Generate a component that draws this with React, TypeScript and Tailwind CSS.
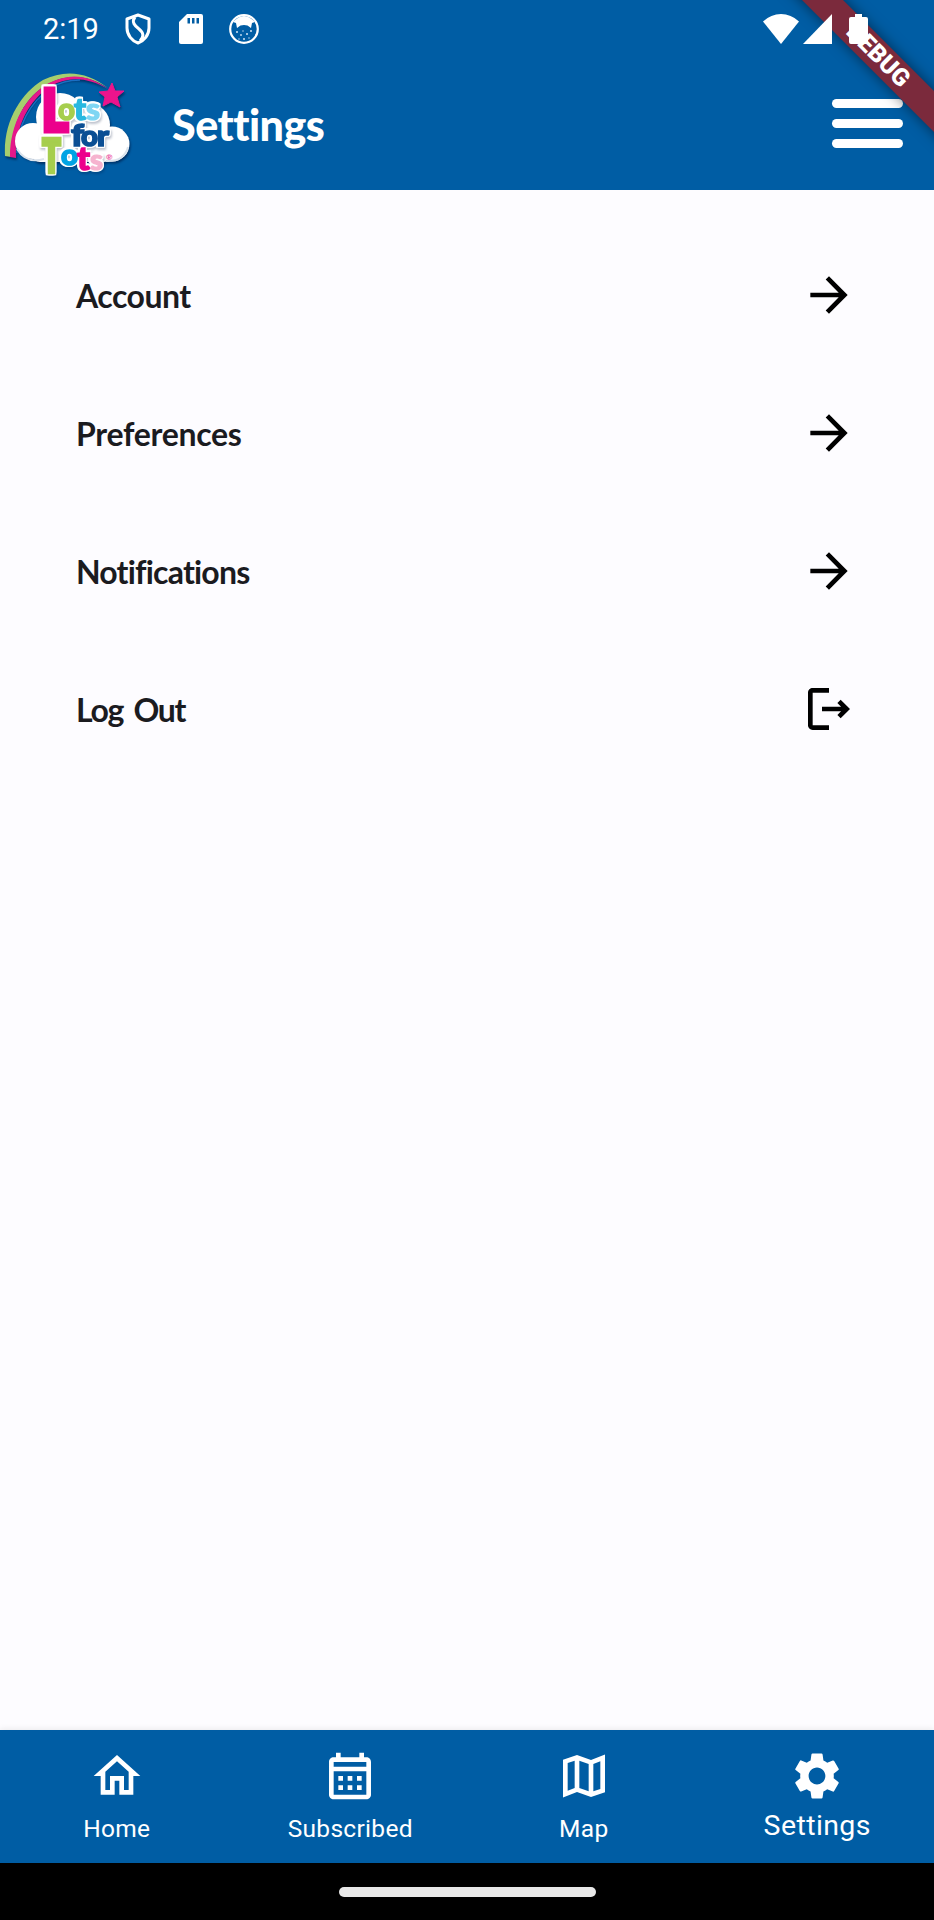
import React from "react";

const ARROW = "M12 4l-1.41 1.41L16.17 11H4v2h12.17l-5.58 5.59L12 20l8-8z";
const LOGOUT =
  "M17 8l-1.41 1.41L17.17 11H9v2h8.17l-1.58 1.58L17 16l4-4-4-4zM5 5h7V3H5c-1.1 0-2 .9-2 2v14c0 1.1.9 2 2 2h7v-2H5V5z";
const HOME = "M12 5.69l5 4.5V18h-2v-6H9v6H7v-7.81l5-4.5M12 3L2 12h3v8h6v-6h2v6h6v-8h3L12 3z";
const CALENDAR =
  "M19 4h-1V2h-2v2H8V2H6v2H5c-1.11 0-1.99.9-1.99 2L3 20c0 1.1.89 2 2 2h14c1.1 0 2-.9 2-2V6c0-1.1-.9-2-2-2zm0 16H5V10h14v10zm0-12H5V6h14v2zM9 14H7v-2h2v2zm4 0h-2v-2h2v2zm4 0h-2v-2h2v2zm-8 4H7v-2h2v2zm4 0h-2v-2h2v2zm4 0h-2v-2h2v2z";
const MAP =
  "M15 5.1L9 3 3 5.02v16.2l6-2.33 6 2.1 6-2.02V2.77L15 5.1zM10 5.47l4 1.4v11.66l-4-1.4V5.47zm-5 .99l3-1.01v11.7l-3 1.16V6.46zm14 11.08l-3 1.01V6.86l3-1.16v11.84z";
const GEAR =
  "M19.14 12.94c.04-.3.06-.61.06-.94 0-.32-.02-.64-.07-.94l2.03-1.58c.18-.14.23-.41.12-.61l-1.92-3.32c-.12-.22-.37-.29-.59-.22l-2.39.96c-.5-.38-1.03-.7-1.62-.94l-.36-2.54c-.04-.24-.24-.41-.48-.41h-3.84c-.24 0-.43.17-.47.41l-.36 2.54c-.59.24-1.13.57-1.62.94l-2.39-.96c-.22-.08-.47 0-.59.22L2.74 8.87c-.12.21-.08.47.12.61l2.03 1.58c-.05.3-.09.63-.09.94s.02.64.07.94l-2.03 1.58c-.18.14-.23.41-.12.61l1.92 3.32c.12.22.37.29.59.22l2.39-.96c.5.38 1.03.7 1.62.94l.36 2.54c.05.24.24.41.48.41h3.84c.24 0 .44-.17.47-.41l.36-2.54c.59-.24 1.13-.56 1.62-.94l2.39.96c.22.08.47 0 .59-.22l1.92-3.32c.12-.22.07-.47-.12-.61l-2.01-1.58zM12 15.6c-1.98 0-3.6-1.62-3.6-3.6s1.62-3.6 3.6-3.6 3.6 1.62 3.6 3.6-1.62 3.6-3.6 3.6z";

function Icon({ d }: { d: string }) {
  return (
    <svg viewBox="0 0 24 24" className="size-14 shrink-0" fill="currentColor">
      <path d={d} />
    </svg>
  );
}

type Glyph = { ch: string; x: number; y: number; size: number; w: number; weight: number; fill: string };

const LETTERS: Glyph[] = [
  { ch: "L", x: 42, y: 71, size: 57, w: 26, weight: 5, fill: "#ec008c" },
  { ch: "T", x: 42.5, y: 112, size: 46, w: 18, weight: 4.5, fill: "#a6ce4e" },
  { ch: "o", x: 58, y: 60, size: 30, w: 17, weight: 1.5, fill: "#a6ce4e" },
  { ch: "t", x: 74, y: 60, size: 30, w: 12, weight: 1.5, fill: "#29b8e0" },
  { ch: "s", x: 86, y: 60, size: 30, w: 14, weight: 1.2, fill: "#7fd6f3" },
  { ch: "f", x: 71, y: 86, size: 30, w: 13, weight: 1.5, fill: "#0b4f94" },
  { ch: "o", x: 81, y: 86, size: 28, w: 17, weight: 1.5, fill: "#0b4f94" },
  { ch: "r", x: 97, y: 86, size: 28, w: 12, weight: 1.5, fill: "#0b4f94" },
  { ch: "o", x: 61, y: 105, size: 29, w: 17, weight: 1.5, fill: "#00a4e4" },
  { ch: "t", x: 77, y: 110, size: 33, w: 13, weight: 1.5, fill: "#ec008c" },
  { ch: "s", x: 90, y: 110, size: 28, w: 13, weight: 1.2, fill: "#f6b3cf" },
];

function Logo() {
  return (
    <svg viewBox="0 -2 150 132" className="h-[132px] w-[150px] shrink-0 font-['Lato',sans-serif] font-black">
      <g className="[filter:drop-shadow(1px_2px_1px_rgba(0,20,60,0.6))]">
        <path d="M5 96C3 62 21 33 43 20C65 9 88 12 108 28C88 14 66 14 48 24C26 36 11 62 11 97Z" fill="#a6ce6e" />
        <path d="M10 97C10 63 26 36 49 23C69 13 88 14 108 29C88 17 68 16 51 26C29 40 15 66 16 98Z" fill="#e5178a" />
      </g>
      <path d="M17 93C17 66 30 42 51 28C60 22 70 20 80 20" fill="none" stroke="#1a6fc4" strokeWidth="1.5" />
      <g fill="#fff" className="[filter:drop-shadow(1px_2px_1px_rgba(0,20,60,0.6))]">
        <circle cx="33" cy="81" r="18" />
        <circle cx="60" cy="57" r="24" />
        <circle cx="88" cy="65" r="22" />
        <circle cx="112" cy="84" r="17.5" />
        <rect x="32" y="70" width="80" height="32" rx="8" />
      </g>
      <path d="M17 89Q26 104 44 99M106 101Q124 102 128 87" stroke="#dbe3ec" strokeWidth="2" fill="none" />
      <g className="[filter:drop-shadow(1.5px_0_0_#fff)_drop-shadow(-1.5px_0_0_#fff)_drop-shadow(0_1.5px_0_#fff)_drop-shadow(0_-1.5px_0_#fff)_drop-shadow(1px_2px_1px_rgba(0,20,60,0.25))]">
        {LETTERS.map((g, i) => (
          <text
            key={i}
            x={g.x}
            y={g.y}
            fontSize={g.size}
            textLength={g.w}
            lengthAdjust="spacingAndGlyphs"
            fill={g.fill}
            stroke={g.fill}
            strokeWidth={g.weight}
          >
            {g.ch}
          </text>
        ))}
      </g>
      <text x="106" y="100" fontSize="8" fill="#ec5aa6">
        ®
      </text>
      <path
        d="M112 23L115 31L124 31L117 37L120 47L111 42L103 46L105 37L99 32L108 31Z"
        fill="#ec148c"
        stroke="#ec148c"
        className="[filter:drop-shadow(1px_2px_1px_rgba(0,20,60,0.6))]"
      />
    </svg>
  );
}

function StatusBar() {
  return (
    <div className="relative z-20 flex h-[58px] items-center pr-[66px] pl-[43px] text-white">
      <span className="w-[82px] pt-px font-['Roboto',sans-serif] text-[29px] leading-none">2:19</span>
      <svg viewBox="0 0 26 32" className="h-8 w-[26px]" fill="none" stroke="#fff" strokeWidth="3">
        <path d="M13 2L24 6V15C24 22 19 28 13 30C7 28 2 22 2 15V6Z" strokeLinejoin="round" />
        <path d="M10 4C6 9 10 13 14 16C19 20 19 24 15 28" strokeWidth="3" />
      </svg>
      <svg viewBox="0 0 24 30" className="ml-7 h-[30px] w-6">
        <path d="M8 0H22Q24 0 24 2V28Q24 30 22 30H2Q0 30 0 28V8Z" fill="#fff" />
        <path d="M8.5 4V9.5H11V4ZM13 4V9.5H15.5V4ZM17.5 4V9.5H20V4Z" fill="#005da4" />
      </svg>
      <svg viewBox="0 0 30 30" className="ml-[26px] size-[30px]">
        <circle cx="15" cy="15" r="13.8" fill="none" stroke="#fff" strokeWidth="2.2" />
        <path d="M4 8Q15 -4 26 8L23 9L22 14L18.500 11.500Q15 10.500 11.500 11.500L8 14L7 9Z" fill="#fff" />
        <g fill="#cfe3f4">
          <circle cx="8" cy="18" r="1" />
          <circle cx="12" cy="21" r=".9" />
          <circle cx="18" cy="20" r="1" />
          <circle cx="22" cy="17" r="1" />
          <circle cx="15" cy="25" r="1" />
          <circle cx="20" cy="24" r=".7" />
          <circle cx="10" cy="25" r=".7" />
          <circle cx="14" cy="17" r=".7" />
        </g>
      </svg>
      <svg viewBox="0 0 36 30" className="ml-auto h-[30px] w-9" fill="#fff">
        <path d="M0 7.500Q8 0 18 0T36 7.500L18 30Z" />
      </svg>
      <svg viewBox="0 0 29 30" className="ml-1 h-[30px] w-[29px]" fill="#fff">
        <path d="M29 0V30H0Z" />
      </svg>
      <svg viewBox="0 0 19 30" className="ml-[17px] h-[30px] w-[19px]" fill="#fff">
        <path d="M6 0H13V3H17Q19 3 19 5V28Q19 30 17 30H2Q0 30 0 28V5Q0 3 2 3H6Z" />
      </svg>
    </div>
  );
}

function DebugBanner() {
  return (
    <div className="pointer-events-none absolute top-0 right-0 z-10 size-[190px] overflow-hidden">
      <div className="absolute top-[41px] left-[-16px] flex h-[29px] w-[300px] rotate-45 items-center justify-center bg-[#7b2a3c] shadow-[0_0_14px_rgba(0,0,0,0.5)]">
        <span className="font-['Roboto',sans-serif] text-[24.500px] leading-none font-black text-white">DEBUG</span>
      </div>
    </div>
  );
}

const ROWS = [
  { label: "Account", icon: ARROW, tracking: "tracking-[-0.5px]" },
  { label: "Preferences", icon: ARROW, tracking: "tracking-[-0.300px]" },
  { label: "Notifications", icon: ARROW, tracking: "tracking-[-0.800px]" },
  { label: "Log Out", icon: LOGOUT, tracking: "tracking-[-1.300px] [word-spacing:4px]" },
];

const TABS = [
  { label: "Home", icon: HOME, active: false },
  { label: "Subscribed", icon: CALENDAR, active: false },
  { label: "Map", icon: MAP, active: false },
  { label: "Settings", icon: GEAR, active: true },
];

export default function App() {
  return (
    <div className="relative flex h-[1920px] w-[934px] flex-col overflow-hidden bg-[#fdfcff]">
      <header className="h-[190px] bg-[#005da4]">
        <StatusBar />
        <div className="flex h-[132px] items-center pr-[31px]">
          <Logo />
          <h1 className="ml-[22px] font-['Lato',sans-serif] text-[43px] leading-none font-black tracking-[-0.500px] text-white [font-variant-ligatures:none]">
            Settings
          </h1>
          <button aria-label="Menu" className="-mt-px ml-auto flex w-[71px] flex-col gap-[11px]">
            <span className="h-[9px] rounded-full bg-white" />
            <span className="h-[9px] rounded-full bg-white" />
            <span className="h-[9px] rounded-full bg-white" />
          </button>
        </div>
      </header>
      <DebugBanner />

      <main className="flex flex-1 flex-col pt-9">
        {ROWS.map((r) => (
          <div key={r.label} className="flex h-[138px] items-center justify-between pr-[77px] pl-[76px]">
            <span
              className={`pt-px font-['Lato',sans-serif] text-[32px] leading-none font-bold text-[#1b1b1f] [font-variant-ligatures:none] ${r.tracking}`}
            >
              {r.label}
            </span>
            <Icon d={r.icon} />
          </div>
        ))}
      </main>

      <nav className="grid h-[133px] shrink-0 grid-cols-4 bg-[#005da4] text-white shadow-[0_-1px_6px_rgba(0,0,0,0.08)]">
        {TABS.map((t) => (
          <div key={t.label} className="flex flex-col items-center pt-[18px]">
            <Icon d={t.icon} />
            <span
              className={
                t.active
                  ? "mt-[5px] font-['Roboto',sans-serif] text-[28.500px] leading-[34px] tracking-[0.400px]"
                  : "mt-[10px] font-['Roboto',sans-serif] text-[24.500px] leading-[30px] tracking-[0.300px]"
              }
            >
              {t.label}
            </span>
          </div>
        ))}
      </nav>
      <div className="flex h-[57px] shrink-0 items-center justify-center bg-black">
        <div className="h-[10px] w-[257px] rounded-full bg-[#e8e8e8]" />
      </div>
    </div>
  );
}
